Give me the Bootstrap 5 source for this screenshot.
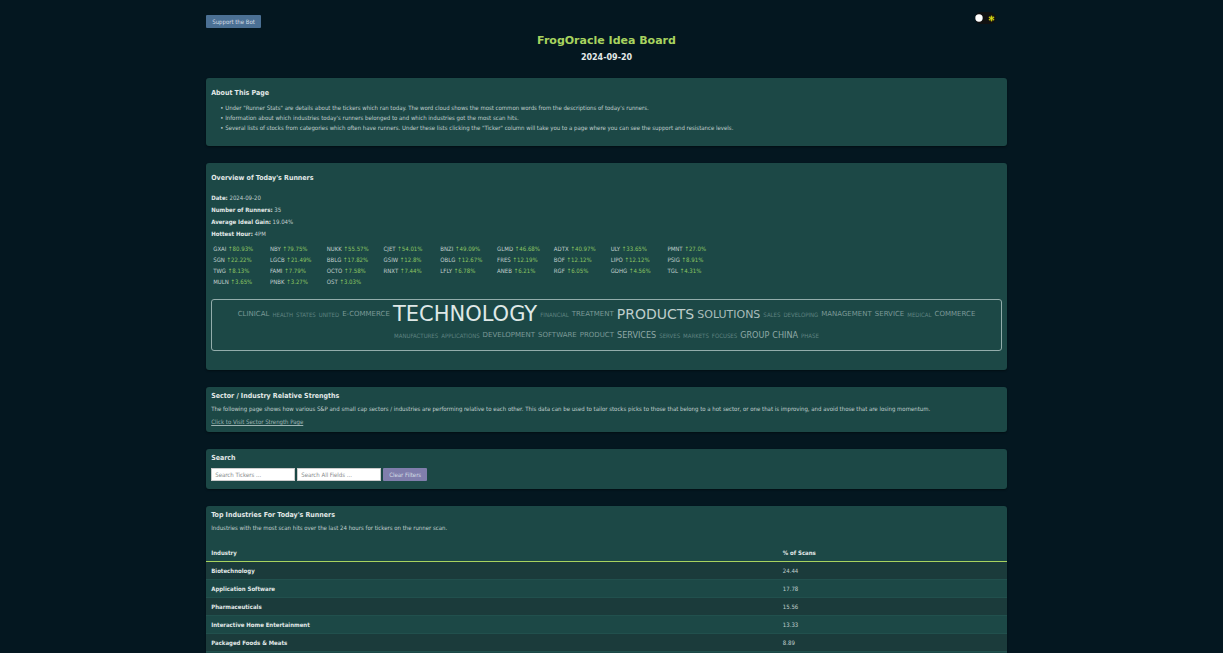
<!DOCTYPE html>
<html lang="en">
<head>
<meta charset="utf-8">
<meta name="viewport" content="width=device-width, initial-scale=1">
<title>FrogOracle Idea Board</title>
<link rel="stylesheet" href="https://cdn.jsdelivr.net/npm/bootstrap@5.3.0/dist/css/bootstrap.min.css">
<style>
:root{--ink:#c0cfce;--bright:#e2e9e8;--lime:#a8d35f;--panel:#1c4846;}
body{background:#041720;color:var(--ink);font-family:"DejaVu Sans Condensed","DejaVu Sans",sans-serif;font-size:6px;line-height:10px;padding-right:10px;overflow-x:hidden}
.page{width:66%}
.topbar{padding-top:15px;height:34px}
.btn-site{--bs-btn-font-size:6px;--bs-btn-padding-x:6px;--bs-btn-padding-y:0;--bs-btn-line-height:13px;--bs-btn-border-width:0;--bs-btn-border-radius:1px;--bs-btn-color:#d5dde6}
.btn-support{background:#4b7094}
.btn-clear{background:#807eac}
.theme-switch{width:21px;height:12px;margin-top:-3px;margin-right:11px;border-radius:6px;background:#111;padding:0 1px 0 0}
.site-title,.site-date{font-family:"DejaVu Sans",sans-serif;font-weight:700}
.site-title{font-size:11px;line-height:14px;color:var(--lime);margin:0}
.site-date{font-size:8px;line-height:10px;color:var(--bright);margin:5px 0 15px}
.panel{background:var(--panel);border-radius:3px;margin-bottom:17px;padding:4px 5px 5px;box-shadow:0 1px 2px #0006}
.panel h2{font-size:7px;line-height:10px;font-weight:700;color:var(--bright);margin:0}
.panel p{margin:0}
.panel .intro{margin:3px 0}
.panel strong,.panel th{color:var(--bright)}
.about{padding-top:10px;padding-bottom:13px}
.about-list{list-style-type:"• ";margin:5px 0 0;padding-left:14px}
.overview{padding-top:10px;padding-bottom:19px}
.stat-list{margin-top:9px}
.stat-list p{line-height:12px}
.runners{display:grid;grid-template-columns:repeat(9,1fr);width:513px;max-width:100%;padding-left:2px;margin-top:3px;line-height:11px}
.runners b{font-weight:400;color:#8cc562}
.cloud{border:1px solid #93adab;border-radius:3px;margin-top:12px;padding:4px 20px;column-gap:3px;line-height:21px;color:#5f8381}
.cloud .w2,.cloud .w4,.cloud .w5,.cloud .w6{font-family:"DejaVu Sans",sans-serif}
.cloud .w2{font-size:7px;color:#7b9997}
.cloud .w3{font-size:9px;color:#90a9a7}
.cloud .w4{font-size:11px;color:#a8bcba}
.cloud .w5{font-size:14px;color:#bfcecc}
.cloud .w6{font-size:21px;color:#dfe8e7}
.panel a{color:#9fb5b4}
.search{padding-bottom:8px}
.search-row{gap:2px;margin-top:5px}
.search-box{width:84px;height:13px;font-size:6px;line-height:10px;padding:0 3px;border:1px solid #ccc;border-radius:0;background:#fff}
.search-box::placeholder{color:#85898b}
.industries{padding-bottom:8px}
.industry{--bs-table-bg:transparent;--bs-table-color:var(--ink);margin:11px -5px 0;width:calc(100% + 10px)}
.industry>:not(caption)>*>*{line-height:10px;padding:4px 5px 3px;border-bottom:1px solid #21504d}
.industry>thead>tr>*{border-bottom-color:var(--lime)}
.industry tbody tr:nth-child(odd){background:#1b3b3b}
</style>
<script src="https://cdn.jsdelivr.net/npm/bootstrap@5.3.0/dist/js/bootstrap.bundle.min.js"></script>
</head>
<body>
<div class="page mx-auto">
<header>
<div class="topbar d-flex justify-content-between align-items-start">
<button type="button" class="btn btn-site btn-support">Support the Bot</button>
<button type="button" class="theme-switch btn border-0 d-flex justify-content-between align-items-center" aria-label="Toggle theme">
<svg width="8" height="8" viewBox="0 0 8 8"><circle cx="4" cy="4" r="3.7" fill="#fff"/></svg>
<svg width="7" height="7" viewBox="0 0 7 7"><g fill="#c2c20c"><circle cx="3.5" cy="1.4" r=".9"/><circle cx="3.5" cy="5.6" r=".9"/><circle cx="1.6" cy="2.4" r=".9"/><circle cx="5.4" cy="2.4" r=".9"/><circle cx="1.6" cy="4.6" r=".9"/><circle cx="5.4" cy="4.6" r=".9"/></g><circle cx="3.5" cy="3.5" r="1.4" fill="#dcdc18"/></svg>
</button>
</div>
<h1 class="site-title text-center">FrogOracle Idea Board</h1>
<p class="site-date text-center">2024-09-20</p>
</header>
<main>
<section class="panel about">
<h2>About This Page</h2>
<ul class="about-list">
<li>Under "Runner Stats" are details about the tickers which ran today. The word cloud shows the most common words from the descriptions of today's runners.</li>
<li>Information about which industries today's runners belonged to and which industries got the most scan hits.</li>
<li>Several lists of stocks from categories which often have runners. Under these lists clicking the "Ticker" column will take you to a page where you can see the support and resistance levels.</li>
</ul>
</section>
<section class="panel overview">
<h2>Overview of Today's Runners</h2>
<div class="stat-list">
<p><strong>Date:</strong> 2024-09-20</p>
<p><strong>Number of Runners:</strong> 35</p>
<p><strong>Average Ideal Gain:</strong> 19.04%</p>
<p><strong>Hottest Hour:</strong> 4PM</p>
</div>
<div class="runners text-nowrap">
<span>GXAI <b>↑80.93%</b></span><span>NBY <b>↑79.75%</b></span><span>NUKK <b>↑55.57%</b></span><span>CJET <b>↑54.01%</b></span><span>BNZI <b>↑49.09%</b></span><span>GLMD <b>↑46.68%</b></span><span>ADTX <b>↑40.97%</b></span><span>ULY <b>↑33.65%</b></span><span>PMNT <b>↑27.0%</b></span>
<span>SGN <b>↑22.22%</b></span><span>LGCB <b>↑21.49%</b></span><span>BBLG <b>↑17.82%</b></span><span>GSIW <b>↑12.8%</b></span><span>OBLG <b>↑12.67%</b></span><span>FRES <b>↑12.19%</b></span><span>BOF <b>↑12.12%</b></span><span>LIPO <b>↑12.12%</b></span><span>PSIG <b>↑8.91%</b></span>
<span>TWG <b>↑8.13%</b></span><span>FAMI <b>↑7.79%</b></span><span>OCTO <b>↑7.58%</b></span><span>RNXT <b>↑7.44%</b></span><span>LFLY <b>↑6.78%</b></span><span>ANEB <b>↑6.21%</b></span><span>RGF <b>↑6.05%</b></span><span>GDHG <b>↑4.56%</b></span><span>TGL <b>↑4.31%</b></span>
<span>MULN <b>↑3.65%</b></span><span>PNBK <b>↑3.27%</b></span><span>OST <b>↑3.03%</b></span>
</div>
<div class="cloud d-flex flex-wrap justify-content-center align-items-center">
<span class="w2">CLINICAL</span> <span>HEALTH</span> <span>STATES</span> <span>UNITED</span> <span class="w2">E-COMMERCE</span> <span class="w6">TECHNOLOGY</span> <span>FINANCIAL</span> <span class="w2">TREATMENT</span> <span class="w5">PRODUCTS</span> <span class="w4">SOLUTIONS</span> <span>SALES</span> <span>DEVELOPING</span> <span class="w2">MANAGEMENT</span> <span class="w2">SERVICE</span> <span>MEDICAL</span> <span class="w2">COMMERCE</span> <span>MANUFACTURES</span> <span>APPLICATIONS</span> <span class="w2">DEVELOPMENT</span> <span class="w2">SOFTWARE</span> <span class="w2">PRODUCT</span> <span class="w3">SERVICES</span> <span>SERVES</span> <span>MARKETS</span> <span>FOCUSES</span> <span class="w3">GROUP</span> <span class="w3">CHINA</span> <span>PHASE</span>
</div>
</section>
<section class="panel">
<h2>Sector / Industry Relative Strengths</h2>
<p class="intro">The following page shows how various S&amp;P and small cap sectors / industries are performing relative to each other. This data can be used to tailor stocks picks to those that belong to a hot sector, or one that is improving, and avoid those that are losing momentum.</p>
<a href="#" class="d-inline-block align-top">Click to Visit Sector Strength Page</a>
</section>
<section class="panel search">
<h2>Search</h2>
<form class="search-row d-flex">
<input type="text" class="search-box" placeholder="Search Tickers ..." aria-label="Search tickers">
<input type="text" class="search-box" placeholder="Search All Fields ..." aria-label="Search all fields">
<button type="reset" class="btn btn-site btn-clear">Clear Filters</button>
</form>
</section>
<section class="panel industries">
<h2>Top Industries For Today's Runners</h2>
<p class="intro">Industries with the most scan hits over the last 24 hours for tickers on the runner scan.</p>
<table class="table industry">
<colgroup><col style="width:71.4%"><col></colgroup>
<thead><tr><th scope="col">Industry</th><th scope="col">% of Scans</th></tr></thead>
<tbody>
<tr><th scope="row">Biotechnology</th><td>24.44</td></tr>
<tr><th scope="row">Application Software</th><td>17.78</td></tr>
<tr><th scope="row">Pharmaceuticals</th><td>15.56</td></tr>
<tr><th scope="row">Interactive Home Entertainment</th><td>13.33</td></tr>
<tr><th scope="row">Packaged Foods &amp; Meats</th><td>8.89</td></tr>
</tbody>
</table>
</section>
</main>
</div>
</body>
</html>
